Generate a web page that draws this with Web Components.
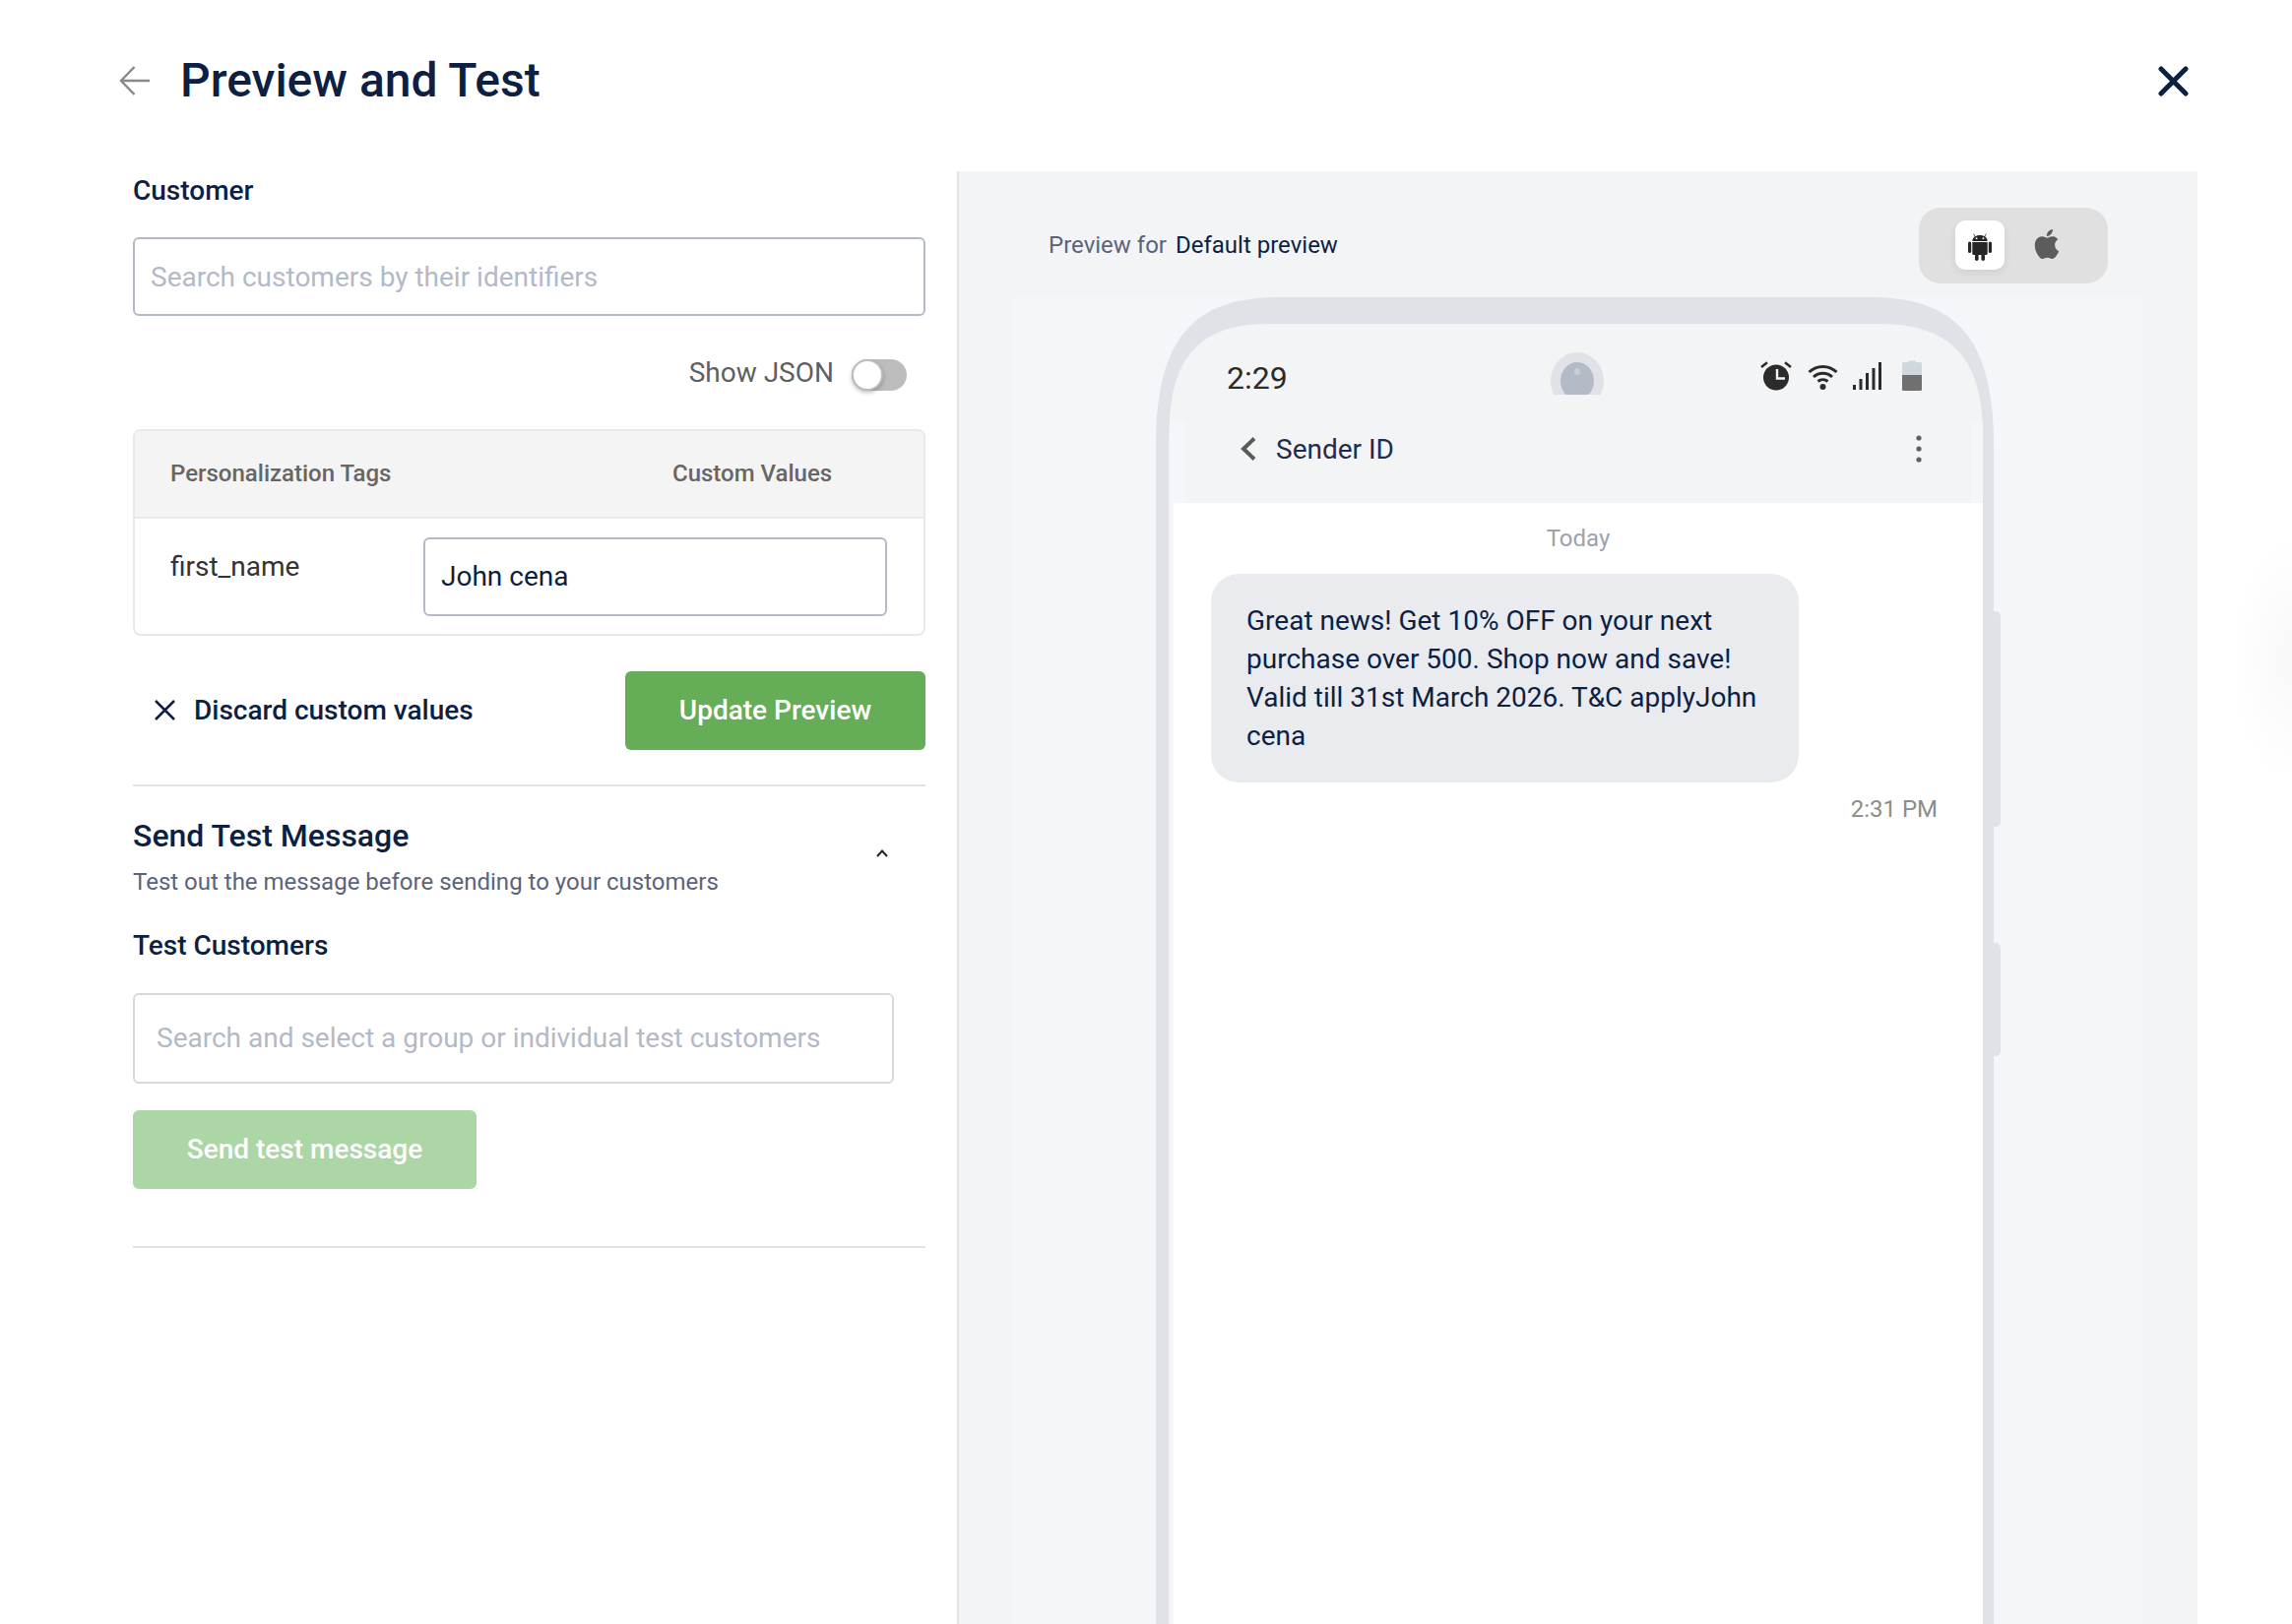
<!DOCTYPE html>
<html>
<head>
<meta charset="utf-8">
<title>Preview and Test</title>
<style>
  html, body { margin: 0; padding: 0; background: #ffffff; }
  body { font-family: Roboto, 'Liberation Sans', sans-serif; color: #0d1f42; }
</style>
</head>
<body>
<pt-dialog>
  <pt-header slot="header">Preview and Test</pt-header>
  <pt-customer-form slot="form"></pt-customer-form>
  <pt-preview-panel slot="preview">
    <pt-phone>
      <pt-message time="2:31 PM">Great news! Get 10% OFF on your next purchase over 500. Shop now and save! Valid till 31st March 2026. T&amp;C applyJohn cena</pt-message>
    </pt-phone>
  </pt-preview-panel>
</pt-dialog>

<script>
// Small helper, every element gets an open root from a string
class PtElement extends HTMLElement {
  constructor( html ) {
    super();

    const template = document.createElement( 'template' );
    template.innerHTML = html;

    const shadowRoot = this.attachShadow( {mode: 'open'} );
    shadowRoot.appendChild( template.content.cloneNode( true ) );
  }
}

class PtDialog extends PtElement {
  constructor() {
    super( /* template */ `
      <style>
        :host {
          background: #ffffff;
          box-sizing: border-box;
          display: block;
          height: 1650px;
          overflow: hidden;
          position: relative;
          width: 2328px;
        }

        main {
          display: flex;
          flex-direction: row;
          height: 1476px;
        }

        /* Shadow of something off canvas */
        div {
          background: radial-gradient( ellipse at right center, #f8f8f8 0%, #fcfcfc 40%, #ffffff 72% );
          height: 240px;
          position: absolute;
          right: 0;
          top: 550px;
          width: 60px;
        }
      </style>
      <slot name="header"></slot>
      <main>
        <slot name="form"></slot>
        <slot name="preview"></slot>
      </main>
      <div></div>
    ` );
  }
}

class PtHeader extends PtElement {
  constructor() {
    super( /* template */ `
      <style>
        :host {
          align-items: center;
          box-sizing: border-box;
          display: flex;
          flex-direction: row;
          height: 174px;
          padding: 0 105px 10px 121px;
        }

        svg {
          display: block;
          flex-shrink: 0;
        }

        h1 {
          color: #0d1f42;
          flex-grow: 1;
          font-size: 48px;
          font-weight: 500;
          line-height: 60px;
          margin: 0 0 0 30px;
        }
      </style>
      <svg width="32" height="30" viewBox="0 0 32 30" fill="none" stroke="#8a8a8a" stroke-width="2.5">
        <path d="M31 15 H2 M15.5 1 L2 15 L15.5 29"/>
      </svg>
      <h1><slot></slot></h1>
      <svg width="31" height="31" viewBox="0 0 31 31" fill="none" stroke="#0d1f42" stroke-width="5" stroke-linecap="round">
        <path d="M3 3 L28 28 M28 3 L3 28"/>
      </svg>
    ` );
  }
}

class PtTextField extends PtElement {
  constructor() {
    super( /* template */ `
      <style>
        :host {
          background: #ffffff;
          border: solid 2px var( --field-border, #b4b9c7 );
          border-radius: 6px;
          box-sizing: border-box;
          display: flex;
          align-items: center;
          height: var( --field-height, 80px );
          padding: 0 var( --field-padding, 16px );
        }

        p {
          color: #0d1f42;
          font-size: 28px;
          line-height: 36px;
          margin: 0;
          padding-top: var( --field-nudge, 0 );
          white-space: nowrap;
        }

        :host( [placeholder] ) p {
          color: #b4b9c7;
        }
      </style>
      <p><slot></slot></p>
    ` );
  }
}

class PtToggle extends PtElement {
  constructor() {
    super( /* template */ `
      <style>
        :host {
          align-items: center;
          display: flex;
          flex-direction: row;
          gap: 18px;
          height: 32px;
        }

        p {
          color: #5f5f5f;
          font-size: 28px;
          line-height: 36px;
          margin: -4px 0 0 0;
        }

        div {
          background: #bdbdbd;
          border-radius: 16px;
          height: 32px;
          position: relative;
          width: 56px;
        }

        span {
          background: #ffffff;
          border: solid 2px #bdbdbd;
          border-radius: 50%;
          box-shadow: 0 2px 4px rgba( 0, 0, 0, 0.25 );
          box-sizing: border-box;
          height: 32px;
          left: 0;
          position: absolute;
          top: 0;
          width: 32px;
        }
      </style>
      <p><slot></slot></p>
      <div><span></span></div>
    ` );
  }
}

class PtButton extends PtElement {
  constructor() {
    super( /* template */ `
      <style>
        :host {
          align-items: center;
          background: #66ad58;
          border-radius: 6px;
          box-sizing: border-box;
          color: #ffffff;
          display: flex;
          font-size: 28px;
          font-weight: 500;
          height: 80px;
          justify-content: center;
          padding-bottom: 2px;
          width: var( --button-width, 305px );
        }

        :host( [disabled] ) {
          background: #add6a6;
        }
      </style>
      <slot></slot>
    ` );
  }
}

class PtTagTable extends PtElement {
  constructor() {
    super( /* template */ `
      <style>
        :host {
          border: solid 2px #e8e9ec;
          border-radius: 8px;
          box-sizing: border-box;
          display: block;
          height: 210px;
          overflow: hidden;
        }

        header {
          background: #f4f4f4;
          border-bottom: solid 2px #e8e9ec;
          box-sizing: border-box;
          color: #666666;
          display: grid;
          font-size: 24px;
          font-weight: 500;
          grid-template-columns: 510px 1fr;
          height: 89px;
          line-height: 87px;
          padding: 0 0 0 36px;
        }

        section {
          display: flex;
          flex-direction: row;
          padding: 19px 0 0 36px;
        }

        p {
          color: #333333;
          font-size: 28px;
          line-height: 36px;
          margin: 12px 0 0 0;
          width: 257px;
        }

        pt-text-field {
          width: 471px;
        }
      </style>
      <header>
        <span>Personalization Tags</span>
        <span>Custom Values</span>
      </header>
      <section>
        <p>first_name</p>
        <pt-text-field>John cena</pt-text-field>
      </section>
    ` );
  }
}

class PtCustomerForm extends PtElement {
  constructor() {
    super( /* template */ `
      <style>
        :host {
          box-sizing: border-box;
          display: block;
          flex-shrink: 0;
          margin: 0 32px 0 135px;
          width: 805px;
        }

        h2 {
          color: #0d1f42;
          font-size: 28px;
          font-weight: 500;
          line-height: 38px;
          margin: 0;
        }

        .customer-label {
          padding-top: 1px;
        }

        .customer {
          --field-nudge: 1px;
          margin-top: 28px;
        }

        pt-toggle {
          justify-content: flex-end;
          margin: 44px 19px 0 0;
        }

        pt-tag-table {
          margin-top: 39px;
        }

        .actions {
          align-items: center;
          display: flex;
          flex-direction: row;
          justify-content: space-between;
          margin-top: 36px;
        }

        .discard {
          align-items: center;
          color: #0d1f42;
          display: flex;
          flex-direction: row;
          font-size: 28px;
          font-weight: 500;
          gap: 19px;
          padding-bottom: 2px;
          padding-left: 22px;
        }

        hr {
          background: #e2e3e8;
          border: none;
          height: 2px;
          margin: 35px 0 0 0;
        }

        .test {
          align-items: flex-start;
          display: flex;
          flex-direction: row;
          justify-content: space-between;
          margin-top: 30px;
        }

        h3 {
          color: #0d1f42;
          font-size: 32px;
          font-weight: 500;
          line-height: 40px;
          margin: 0;
        }

        .test p {
          color: #5b637a;
          font-size: 24px;
          line-height: 32px;
          margin: 11px 0 0 0;
        }

        .test svg {
          margin: 34px 38px 0 0;
        }

        .test-label {
          margin-top: 30px;
        }

        .test-customers {
          --field-border: #d8d9dd;
          --field-height: 92px;
          --field-padding: 22px;
          margin-top: 29px;
          width: 773px;
        }

        .send {
          --button-width: 349px;
          margin-top: 27px;
        }

        .last {
          margin-top: 58px;
        }
      </style>
      <h2 class="customer-label">Customer</h2>
      <pt-text-field class="customer" placeholder>Search customers by their identifiers</pt-text-field>
      <pt-toggle>Show JSON</pt-toggle>
      <pt-tag-table></pt-tag-table>
      <div class="actions">
        <div class="discard">
          <svg width="21" height="21" viewBox="0 0 21 21" fill="none" stroke="#0d1f42" stroke-width="2.5">
            <path d="M1 1 L20 20 M20 1 L1 20"/>
          </svg>
          <span>Discard custom values</span>
        </div>
        <pt-button>Update Preview</pt-button>
      </div>
      <hr>
      <div class="test">
        <div>
          <h3>Send Test Message</h3>
          <p>Test out the message before sending to your customers</p>
        </div>
        <svg width="12" height="8" viewBox="0 0 12 8" fill="none" stroke="#222222" stroke-width="2">
          <path d="M1 7 L6 1.5 L11 7"/>
        </svg>
      </div>
      <h2 class="test-label">Test Customers</h2>
      <pt-text-field class="test-customers" placeholder>Search and select a group or individual test customers</pt-text-field>
      <pt-button class="send" disabled>Send test message</pt-button>
      <hr class="last">
    ` );
  }
}

class PtOsSwitch extends PtElement {
  constructor() {
    super( /* template */ `
      <style>
        :host {
          align-items: center;
          background: #e0e0e0;
          border-radius: 22px;
          box-sizing: border-box;
          display: flex;
          flex-direction: row;
          gap: 25px;
          height: 77px;
          padding: 0 0 0 37px;
          width: 192px;
        }

        div {
          align-items: center;
          background: #ffffff;
          border-radius: 10px;
          box-shadow: 0 3px 8px rgba( 0, 0, 0, 0.08 );
          display: flex;
          height: 50px;
          justify-content: center;
          margin-top: -1px;
          width: 50px;
        }

        svg {
          display: block;
        }

        .android {
          margin-top: 3px;
        }

        .apple {
          margin-top: -3px;
        }
      </style>
      <div>
        <svg class="android" width="24" height="28" viewBox="0 0 24 28" fill="#262626">
          <path d="M4.3 8 C4.5 4.3 7.5 2 12 2 C16.5 2 19.5 4.3 19.7 8 Z"/>
          <path d="M7.2 3.4 L5.6 0.6 M16.8 3.4 L18.4 0.6" stroke="#262626" stroke-width="0.8"/>
          <circle cx="8.6" cy="5.2" r="0.9" fill="#ffffff"/>
          <circle cx="15.4" cy="5.2" r="0.9" fill="#ffffff"/>
          <path d="M4.3 9 H19.7 V20.5 Q19.7 22 18.2 22 H5.8 Q4.3 22 4.3 20.5 Z"/>
          <rect x="0" y="8.5" width="3.2" height="11.5" rx="1.6"/>
          <rect x="20.8" y="8.5" width="3.2" height="11.5" rx="1.6"/>
          <rect x="7" y="21" width="3.6" height="7" rx="1.8"/>
          <rect x="13.4" y="21" width="3.6" height="7" rx="1.8"/>
        </svg>
      </div>
      <svg class="apple" width="36" height="36" viewBox="0 0 24 24" fill="#5c5c5c">
        <path d="M18.71 19.5C17.88 20.74 17 21.95 15.66 21.97C14.32 22 13.89 21.18 12.37 21.18C10.84 21.18 10.37 21.95 9.1 22C7.79 22.05 6.8 20.68 5.96 19.47C4.25 17 2.94 12.45 4.7 9.39C5.57 7.87 7.13 6.91 8.82 6.88C10.1 6.86 11.32 7.75 12.11 7.75C12.89 7.75 14.37 6.68 15.92 6.84C16.57 6.87 18.39 7.1 19.56 8.82C19.47 8.88 17.39 10.1 17.41 12.63C17.44 15.65 20.06 16.66 20.09 16.67C20.06 16.74 19.67 18.11 18.71 19.5M13 3.5C13.73 2.67 14.94 2.04 15.94 2C16.07 3.17 15.6 4.35 14.9 5.19C14.21 6.04 13.07 6.7 11.95 6.61C11.8 5.46 12.36 4.26 13 3.5Z"/>
      </svg>
    ` );
  }
}

class PtPreviewPanel extends PtElement {
  constructor() {
    super( /* template */ `
      <style>
        :host {
          background: #f3f4f6;
          border-left: solid 2px #e4e4e6;
          box-sizing: border-box;
          display: block;
          flex-shrink: 0;
          height: 1476px;
          overflow: hidden;
          padding: 37px 0 0 0;
          width: 1260px;
        }

        header {
          align-items: center;
          display: flex;
          flex-direction: row;
          font-size: 24px;
          justify-content: space-between;
          padding: 0 91px 0 91px;
        }

        header > div {
          margin-top: -2px;
        }

        header span {
          color: #5b637a;
          margin-right: 9px;
        }

        header b {
          color: #0d1f42;
          font-weight: 400;
        }

        .stage {
          background: #f5f6fa;
          height: 1400px;
          margin: 14px 55px 0 54px;
          padding: 0 0 0 146px;
        }
      </style>
      <header>
        <div><span>Preview for</span><b>Default preview</b></div>
        <pt-os-switch></pt-os-switch>
      </header>
      <div class="stage">
        <slot></slot>
      </div>
    ` );
  }
}

class PtStatusBar extends PtElement {
  constructor() {
    super( /* template */ `
      <style>
        :host {
          align-items: start;
          box-sizing: border-box;
          display: grid;
          grid-template-columns: 1fr auto 1fr;
          height: 99px;
          padding: 29px 62px 0 58px;
        }

        time {
          color: #2b2b2b;
          font-size: 32px;
          line-height: 52px;
        }

        .camera {
          height: 43px;
          margin-left: 6px;
          overflow: hidden;
          position: relative;
          width: 54px;
        }

        .camera b {
          background: #e0e2e7;
          border-radius: 50%;
          height: 58px;
          left: 0;
          position: absolute;
          top: 0;
          width: 54px;
        }

        .camera span {
          background: #b5bbc6;
          border-radius: 50%;
          height: 38px;
          left: 10px;
          position: absolute;
          top: 10px;
          width: 34px;
        }

        .camera i {
          background: #c8cdd6;
          border-radius: 50%;
          height: 7px;
          left: 24px;
          position: absolute;
          top: 16px;
          width: 6px;
        }

        .icons {
          align-items: flex-start;
          display: flex;
          flex-direction: row;
          justify-content: flex-end;
          padding-top: 9px;
        }

        svg {
          display: block;
        }
      </style>
      <time>2:29</time>
      <div class="camera"><b></b><span></span><i></i></div>
      <div class="icons">
        <svg width="32" height="30" viewBox="0 0 32 30" fill="none" stroke="#2b2b2b" style="margin-right: 16px">
          <circle cx="16" cy="16.5" r="13" fill="#2b2b2b" stroke="none"/>
          <path d="M1 6 L7 1.2 M31 6 L25 1.2" stroke-width="2.4"/>
          <path d="M17 8 V17.5 H25" stroke="#f3f4f6" stroke-width="2.4"/>
        </svg>
        <svg width="31" height="30" viewBox="0 0 31 30" fill="none" stroke="#2b2b2b" stroke-width="3" style="margin-right: 15px">
          <path d="M1.5 11 C9.5 3.5 21.5 3.5 29.5 11"/>
          <path d="M6 16 C11.5 11 19.5 11 25 16"/>
          <path d="M10.5 20.5 C13.5 18 17.5 18 20.5 20.5"/>
          <circle cx="15.5" cy="26" r="3" fill="#2b2b2b" stroke="none"/>
        </svg>
        <svg width="29" height="30" viewBox="0 0 29 30" fill="#2b2b2b" style="margin-right: 21px">
          <rect x="0" y="24" width="3" height="5"/>
          <rect x="6.5" y="18" width="3" height="11"/>
          <rect x="13" y="12" width="3" height="17"/>
          <rect x="19.5" y="7" width="3" height="22"/>
          <rect x="26" y="1" width="3" height="28"/>
        </svg>
        <svg width="20" height="31" viewBox="0 0 20 31" style="margin-top: -1px">
          <path d="M6 2 Q6 0.5 7.5 0.5 H12.5 Q14 0.5 14 2 H18.5 Q20 2 20 3.5 V15 H0 V3.5 Q0 2 1.5 2 Z" fill="#cfd8dc"/>
          <path d="M0 15 H20 V29.5 Q20 31 18.5 31 H1.5 Q0 31 0 29.5 Z" fill="#707070"/>
        </svg>
      </div>
    ` );
  }
}

class PtSmsNav extends PtElement {
  constructor() {
    super( /* template */ `
      <style>
        :host {
          align-items: center;
          background: #f3f4f6;
          border-left: solid 16px #f5f6fa;
          border-right: solid 12px #f5f6fa;
          box-sizing: border-box;
          display: flex;
          flex-direction: row;
          height: 83px;
          padding: 0 50px 27px 56px;
        }

        svg {
          display: block;
          flex-shrink: 0;
        }

        span {
          color: #1f2d4d;
          flex-grow: 1;
          font-size: 28px;
          margin-left: 20px;
        }
      </style>
      <svg width="16" height="24" viewBox="0 0 16 24" fill="none" stroke="#5a5a5a" stroke-width="4">
        <path d="M14 1.5 L3 12 L14 22.5"/>
      </svg>
      <span>Sender ID</span>
      <svg width="6" height="28" viewBox="0 0 6 28" fill="#5f5f5f">
        <circle cx="3" cy="3" r="2.6"/>
        <circle cx="3" cy="14" r="2.6"/>
        <circle cx="3" cy="25" r="2.6"/>
      </svg>
    ` );
  }
}

class PtMessage extends PtElement {
  constructor() {
    super( /* template */ `
      <style>
        :host {
          display: block;
        }

        div {
          background: #e9ebef;
          border-radius: 28px;
          box-sizing: border-box;
          color: #0d1f42;
          font-size: 28px;
          height: 212px;
          line-height: 39px;
          padding: 28px 24px 0 36px;
          width: 597px;
        }

        time {
          color: #8c8c8c;
          display: block;
          font-size: 24px;
          line-height: 32px;
          margin-top: 11px;
          padding-right: 46px;
          text-align: right;
        }
      </style>
      <div><slot></slot></div>
      <time></time>
    ` );
  }

  connectedCallback() {
    this.shadowRoot.querySelector( 'time' ).innerText = this.getAttribute( 'time' );
  }
}

class PtPhone extends PtElement {
  constructor() {
    super( /* template */ `
      <style>
        :host {
          display: block;
          height: 1348px;
          position: relative;
          width: 858px;
        }

        svg {
          left: 0;
          position: absolute;
          top: 0;
        }

        .screen {
          box-sizing: border-box;
          left: 14px;
          padding-top: 27px;
          position: absolute;
          top: 0;
          width: 826px;
        }

        .body {
          background: #ffffff;
          height: 1139px;
          margin-left: 4px;
        }

        .today {
          color: #9ca3af;
          font-size: 24px;
          line-height: 32px;
          padding-top: 20px;
          text-align: center;
        }

        ::slotted( pt-message ) {
          margin: 20px 0 0 38px;
        }
      </style>
      <svg width="858" height="1348" viewBox="0 0 858 1348">
        <rect x="845" y="319" width="13" height="219" rx="5" fill="#e0e2e7"/>
        <rect x="845" y="656" width="13" height="115" rx="5" fill="#e0e2e7"/>
        <path d="M0 1348 V150 C0 40 40 0 125 0 H726 C811 0 851 40 851 150 V1348 Z" fill="#e0e2e7"/>
        <path d="M13.5 1348 V140 C13.5 60 45 27 115 27 H735 C805 27 840 60 840 140 V1348 Z" fill="#f3f4f6"/>
        <rect x="13.5" y="140" width="8" height="1208" fill="#f5f6fa"/>
      </svg>
      <div class="screen">
        <pt-status-bar></pt-status-bar>
        <pt-sms-nav></pt-sms-nav>
        <div class="body">
          <div class="today">Today</div>
          <slot></slot>
        </div>
      </div>
    ` );
  }
}

window.customElements.define( 'pt-dialog', PtDialog );
window.customElements.define( 'pt-header', PtHeader );
window.customElements.define( 'pt-text-field', PtTextField );
window.customElements.define( 'pt-toggle', PtToggle );
window.customElements.define( 'pt-button', PtButton );
window.customElements.define( 'pt-tag-table', PtTagTable );
window.customElements.define( 'pt-customer-form', PtCustomerForm );
window.customElements.define( 'pt-os-switch', PtOsSwitch );
window.customElements.define( 'pt-preview-panel', PtPreviewPanel );
window.customElements.define( 'pt-status-bar', PtStatusBar );
window.customElements.define( 'pt-sms-nav', PtSmsNav );
window.customElements.define( 'pt-message', PtMessage );
window.customElements.define( 'pt-phone', PtPhone );
</script>
</body>
</html>
